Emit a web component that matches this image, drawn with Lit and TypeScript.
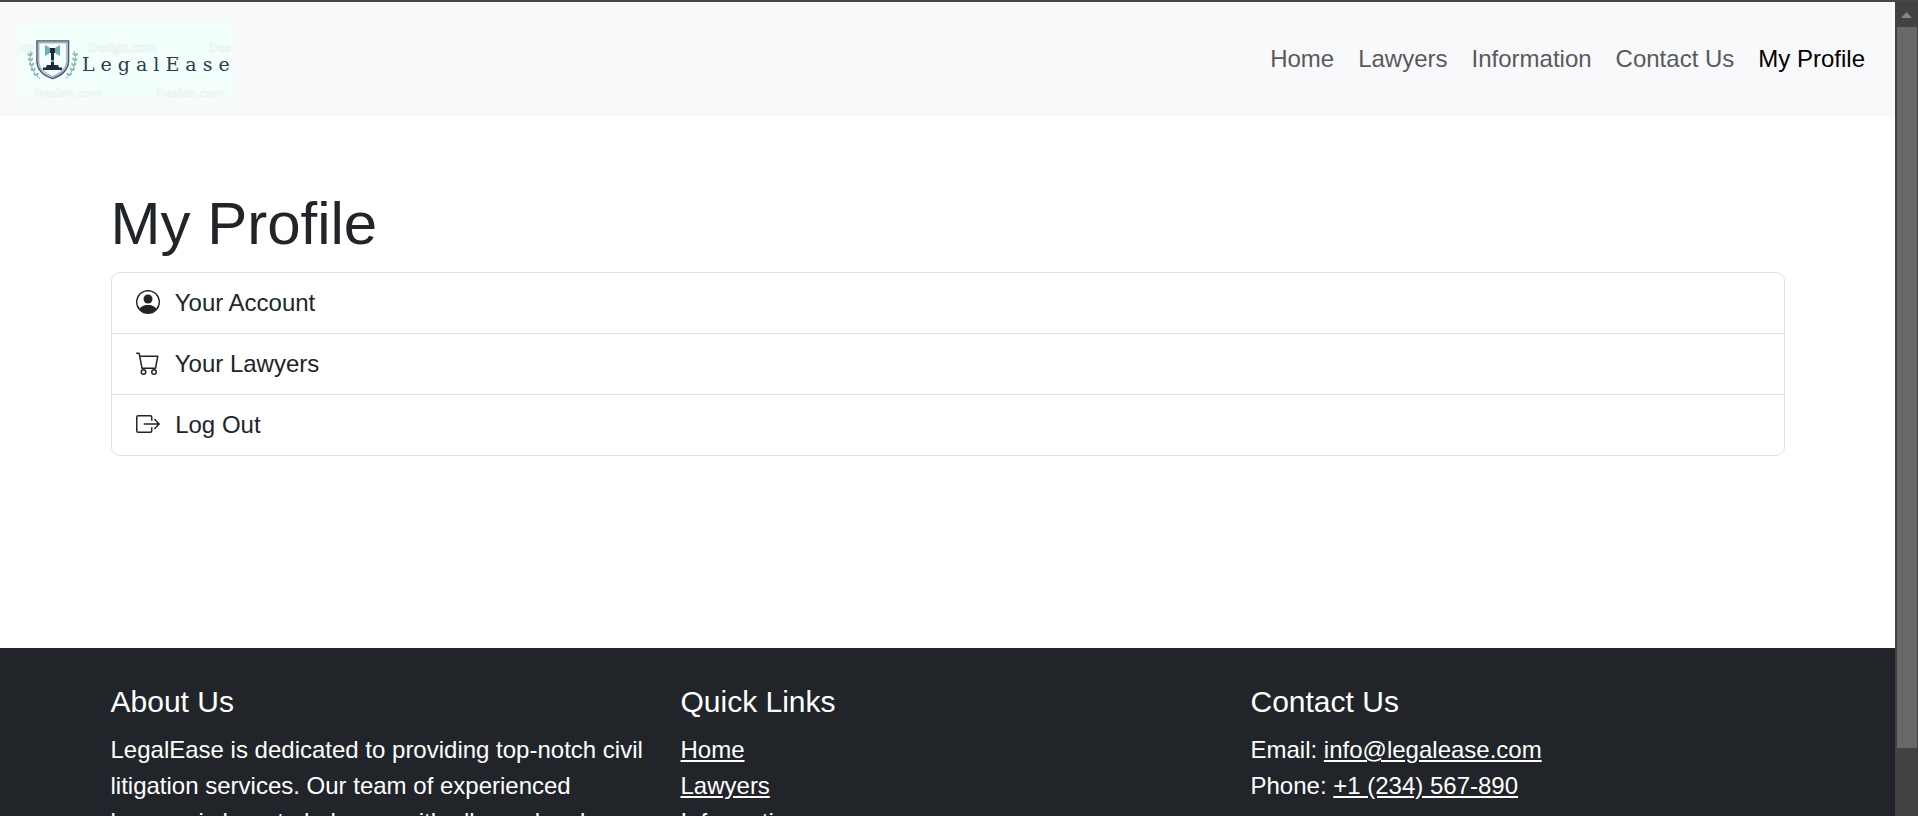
import { LitElement, html, css, svg } from "lit";
import { customElement } from "lit/decorators.js";

const twigs = [
  [30, 56],
  [30.5, 61],
  [31.5, 66],
  [33, 71],
  [36, 76],
];

const laurel = svg`
  <path d="M31 51C28.500 60 31 71 40 79" fill="none" stroke="#7fb9b0" stroke-width="1"/>
  ${twigs.map(([x, y]) => svg`
    <path d="M${x} ${y}q-2.500.2-2.500-3q2.500 0 2.500 3z" fill="#7fb9b0"/>
    <path d="M${x} ${y}q0-3.200 2.800-3.200q0 3-2.800 3.200z" fill="#7fb9b0"/>`)}`;

@customElement("legal-logo")
export class LegalLogo extends LitElement {
  static styles = css`
    :host { display: block; }
    .logo { display: block; width: 214px; height: 75px; }
    .name { font: 19px "DejaVu Serif", serif; letter-spacing: 6px; fill: #2a3a50; }
    .mark { font: bold 12px "Open Sans", sans-serif; fill: #f3fcf8; stroke: #e4eeeb; stroke-width: 0.5px; }
  `;

  render() {
    return html`
      <svg class="logo" viewBox="18 22 214 75" role="img" aria-label="LegalEase">
        <rect x="18" y="22" width="214" height="75" fill="#f3fffb"/>
        <text class="mark" x="88" y="52">Design.com</text>
        <text class="mark" x="209" y="52">Des</text>
        <text class="mark" x="15" y="52">om</text>
        <text class="mark" x="34" y="98">Design.com</text>
        <text class="mark" x="156" y="98">Design.com</text>
        ${laurel}
        <g transform="translate(105.4 0) scale(-1 1)">${laurel}</g>
        <path d="M37 41H68.500V61C68.500 70 61 76 52.700 78.500C44 76 37 70 37 61Z" fill="#f3fffb" stroke="#4a5872" stroke-width="1.600"/>
        <path d="M38.600 42.600H66.900V61C66.900 68.500 60 74 52.700 76.700C45 74 38.600 68.500 38.600 61Z" fill="none" stroke="#a9b3c5" stroke-width="1.600"/>
        <path d="M45 45L50 48H55L60 45V56L55 53H50L45 56Z" fill="#6fb1a7"/>
        <path d="M50 48H55V53H54V65H51V53H50Z" fill="#1c2a40"/>
        <path d="M51 60H54V62H51Z" fill="#6fb1a7"/>
        <path d="M47 65H58L59 67.500H62V70H43V67.500H46Z" fill="#1c2a40"/>
        <text class="name" x="82" y="71">LegalEase</text>
      </svg>
    `;
  }
}

const personIcon = svg`
  <path d="M11 6a3 3 0 1 1-6 0 3 3 0 0 1 6 0"/>
  <path fill-rule="evenodd" d="M0 8a8 8 0 1 1 16 0A8 8 0 0 1 0 8m8-7a7 7 0 0 0-5.468 11.370C3.242 11.226 4.805 10 8 10s4.757 1.225 5.468 2.370A7 7 0 0 0 8 1"/>`;

const cartIcon = svg`
  <path d="M0 1.500A.5.5 0 0 1 .5 1H2a.5.5 0 0 1 .485.379L2.890 3H14.500a.5.5 0 0 1 .491.592l-1.500 8A.5.5 0 0 1 13 12H4a.5.5 0 0 1-.491-.408L2.010 3.607 1.610 2H.5a.5.5 0 0 1-.5-.5M3.102 4l1.313 7h8.170l1.313-7zM5 12a2 2 0 1 0 0 4 2 2 0 0 0 0-4m7 0a2 2 0 1 0 0 4 2 2 0 0 0 0-4m-7 1a1 1 0 1 1 0 2 1 1 0 0 1 0-2m7 0a1 1 0 1 1 0 2 1 1 0 0 1 0-2"/>`;

const exitIcon = svg`
  <path fill-rule="evenodd" d="M10 12.500a.5.5 0 0 1-.5.5h-8a.5.5 0 0 1-.5-.5v-9a.5.5 0 0 1 .5-.5h8a.5.5 0 0 1 .5.5v2a.5.5 0 0 0 1 0v-2A1.500 1.500 0 0 0 9.500 2h-8A1.500 1.500 0 0 0 0 3.500v9A1.500 1.500 0 0 0 1.500 14h8a1.500 1.500 0 0 0 1.500-1.500v-2a.5.5 0 0 0-1 0z"/>
  <path fill-rule="evenodd" d="M15.854 8.354a.5.5 0 0 0 0-.708l-3-3a.5.5 0 0 0-.708.708L14.293 7.500H5.500a.5.5 0 0 0 0 1h8.793l-2.147 2.146a.5.5 0 0 0 .708.708z"/>`;

@customElement("app-root")
export class AppRoot extends LitElement {
  static styles = css`
    :host {
      display: flex;
      flex-direction: column;
      height: 100vh;
      overflow: hidden;
      border-top: 2px solid #474747;
      box-sizing: border-box;
      font-family: "Liberation Sans", Arial, sans-serif;
      font-size: 24px;
      line-height: 36px;
      color: #212529;
      background: #fff;
    }
    .window { display: flex; flex: 1; min-height: 0; }
    .page { flex: 1; min-width: 0; overflow: hidden; }
    a { color: inherit; }

    .navbar {
      display: flex;
      align-items: center;
      justify-content: space-between;
      padding: 20px 18px 19px;
      background: #f8f9fa;
    }
    .links { display: flex; margin: 0; padding: 0; list-style: none; }
    .nav-link { display: block; padding: 12px 12px 14px; color: #585959; text-decoration: none; }
    .nav-link.active { color: #000; }

    .container { max-width: 1674px; margin: 0 auto; padding: 0 18px; }
    .main { padding-top: 72px; padding-bottom: 192px; }
    .title { margin: 0 0 12px; font-size: 60px; line-height: 72px; font-weight: 400; }
    .list { margin: 0; padding: 0; list-style: none; border: 1px solid #dee2e6; border-radius: 9px; }
    .entry + .entry { border-top: 1px solid #dee2e6; }
    .entry-link { display: block; padding: 12px 24px; text-decoration: none; }
    .icon { width: 24px; height: 24px; margin-right: 9px; vertical-align: -3px; fill: currentColor; }

    .footer { padding: 36px 0; background: #212529; color: #fff; }
    .columns { display: grid; grid-template-columns: repeat(3, 1fr); gap: 36px; }
    .heading { margin: 0 0 12px; font-size: 30px; line-height: 36px; font-weight: 400; }
    .text { margin: 0; }
    .plain { margin: 0; padding: 0; list-style: none; }

    .scrollbar { display: flex; flex-direction: column; width: 23px; background: #424242; }
    .arrow { display: flex; align-items: center; justify-content: center; height: 25px; padding: 0; border: 0; background: none; }
    .thumb { height: 91.4%; margin: 0 1px 0 2px; background: #686868; }
    .track { flex: 1; min-height: 0; }
  `;

  private nav = ["Home", "Lawyers", "Information", "Contact Us", "My Profile"];

  private entries = [
    { label: "Your Account", icon: personIcon },
    { label: "Your Lawyers", icon: cartIcon },
    { label: "Log Out", icon: exitIcon },
  ];

  render() {
    return html`
      <div class="window">
        <div class="page">
          <nav class="navbar">
            <a href="#" aria-label="LegalEase"><legal-logo></legal-logo></a>
            <ul class="links">
              ${this.nav.map((name) => html`
                <li><a class="nav-link ${name === "My Profile" ? "active" : ""}" href="#">${name}</a></li>`)}
            </ul>
          </nav>
          <main class="container main">
            <h1 class="title">My Profile</h1>
            <ul class="list">
              ${this.entries.map((e) => html`
                <li class="entry">
                  <a class="entry-link" href="#"><svg class="icon" viewBox="0 0 16 16" aria-hidden="true">${e.icon}</svg> ${e.label}</a>
                </li>`)}
            </ul>
          </main>
          <footer class="footer">
            <div class="container columns">
              <section>
                <h5 class="heading">About Us</h5>
                <p class="text">LegalEase is dedicated to providing top-notch civil litigation services. Our team of experienced lawyers is here to help you with all your legal needs.</p>
              </section>
              <section>
                <h5 class="heading">Quick Links</h5>
                <ul class="plain">
                  ${this.nav.slice(0, 4).map((name) => html`<li><a href="#">${name}</a></li>`)}
                </ul>
              </section>
              <section>
                <h5 class="heading">Contact Us</h5>
                <p class="text">Email: <a href="mailto:info@legalease.com">info@legalease.com</a></p>
                <p class="text">Phone: <a href="tel:+1234567890">+1 (234) 567-890</a></p>
              </section>
            </div>
          </footer>
        </div>
        <div class="scrollbar">
          <button class="arrow" aria-label="Scroll up">
            <svg width="11" height="6" viewBox="0 0 11 6"><path d="M0 6L5.500 0L11 6Z" fill="#868686"/></svg>
          </button>
          <div class="track"><div class="thumb"></div></div>
        </div>
      </div>
    `;
  }
}
